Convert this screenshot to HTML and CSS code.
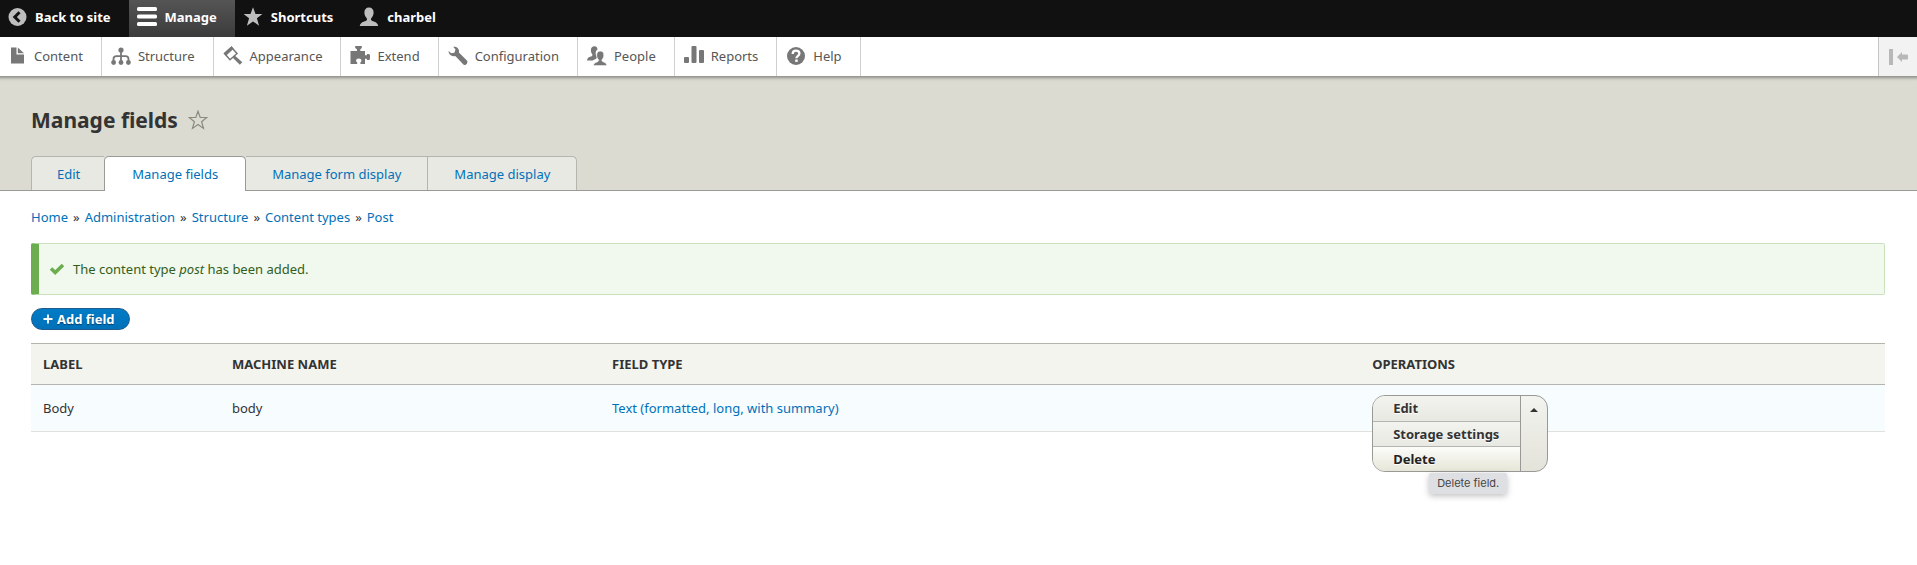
FILE: index.html
```html
<!DOCTYPE html>
<html lang="en">
<head>
<meta charset="utf-8">
<title>Manage fields</title>
<link rel="stylesheet" href="styles.css">
</head>
<body>
<nav class="bar" aria-label="Toolbar">
  <a class="bar-item" href="#"><svg class="icon" viewBox="0 0 20 20"><circle cx="10.500" cy="10" r="9" fill="#bebebe"/><path d="M12.500 5.200 7.800 10l4.700 4.800" fill="none" stroke="#111" stroke-width="3"/></svg>Back to site</a>
  <a class="bar-item bar-item-active" href="#"><svg class="icon" viewBox="0 0 20 20"><g fill="#fff"><rect y="0" width="20" height="4" rx="1.500"/><rect y="7.500" width="20" height="4" rx="1.500"/><rect y="15" width="20" height="4" rx="1.500"/></g></svg>Manage</a>
  <a class="bar-item" href="#"><svg class="icon" viewBox="0 0 20 20"><path fill="#bebebe" d="M10 .3l2.500 6.700h6.900l-5.500 4.300 2.200 7.400L10 14.400l-6.100 4.300 2.200-7.400L.6 7h6.900z"/></svg>Shortcuts</a>
  <a class="bar-item" href="#"><svg class="icon" viewBox="0 0 20 20"><path fill="#bebebe" d="M10 .5c3 0 4.700 2 4.600 5 0 2.300-1 4.300-2.300 5.700-.8 1.100-.2 2.300 1 2.800 2.600 1 5.400 1.600 5.900 4.900H.8c.5-3.300 3.300-3.900 5.900-4.900 1.200-.5 1.800-1.700 1-2.800C6.400 9.800 5.400 7.800 5.400 5.500 5.300 2.500 7 .5 10 .5z"/></svg>charbel</a>
</nav>
<nav class="tray" aria-label="Administration menu">
  <a class="tray-item" href="#"><svg class="icon" viewBox="0 0 20 20"><path d="M4 1.500h5.500v7H17v9H4z"/><path d="M10.800 1.500 17 7.300h-6.200z"/></svg>Content</a>
  <a class="tray-item" href="#"><svg class="icon" viewBox="0 0 20 20"><circle cx="10" cy="4" r="2.600"/><path fill="none" stroke="#777" stroke-width="1.800" d="M10 4v12M2.500 16v-3q0-2.800 3-2.800h9q3 0 3 2.800v3"/><circle cx="2.600" cy="16.500" r="2.400"/><circle cx="10" cy="16.500" r="2.400"/><circle cx="17.400" cy="16.500" r="2.400"/></svg>Structure</a>
  <a class="tray-item" href="#"><svg class="icon" viewBox="0 0 20 20"><path fill="none" stroke="#777" stroke-width="1.500" d="M1.500 7.500 8.500 1.300l5.500 6.200-7 6.300z"/><path d="M.8 7.300 8.500.3l2.200 2.400-7.700 7zM9.500 11.500l2.200-1.900 7.600 6.700-2.500 2.500z"/></svg>Appearance</a>
  <a class="tray-item" href="#"><svg class="icon" viewBox="0 0 20 20"><path d="M5.200 0h6.600v2L10.300 3.200V5H15v4.200h1.600L17.200 8h1.500q1.300 0 1.300 1.500v3q0 1.500-1.300 1.500h-1.500l-.6-1.200H15V18h-4.600v-1.500l1-1.200q.3-2.700-2.600-2.800-3 .1-2.700 2.800l1.100 1.200V18H.5V5h6.400V3.200L5.200 2z"/></svg>Extend</a>
  <a class="tray-item" href="#"><svg class="icon" viewBox="0 0 20 20"><path d="M5.200.8c3.500-.6 6.500 2 5.700 5.600l8 8.200c1.200 1.300 0 3.500-1.200 4.100-1.300.5-2.100 0-2.800-.7L7.300 9.900C4 11 .7 8.700.5 5.100L3.300 7.300 6.400 6.700 7.500 3.600z"/></svg>Configuration</a>
  <a class="tray-item" href="#"><svg class="icon" viewBox="0 0 20 20"><path d="M7.300.2c2 0 3.200 1.200 3.200 3.300-2.500 1.600-2.300 5.400-.3 7.800-.3 1.700-2.500 2.200-4.600 3.200H0c.2-2.400 1.700-3.200 3.900-3.900 1.500-.5 1.900-1.500 1.200-2.600C3.200 5.600 3.300.2 7.300.2z"/><path stroke="#fff" stroke-width=".8" d="M13.300 5c2.600 0 3.700 1.700 3.600 4.200-.1 2-.9 3.300-1.700 4.400-.7 1 0 1.800 1 2.200 2 .8 3.500 1.200 3.800 3.900H6.300c.3-2.700 2-3.100 4-3.900 1.200-.5 1.700-1.200 1-2.200-.8-1.100-1.700-2.400-1.700-4.400 0-2.500 1.100-4.200 3.700-4.200z"/></svg>People</a>
  <a class="tray-item" href="#"><svg class="icon" viewBox="0 0 20 20"><rect x="0" y="11" width="5" height="6" rx="1"/><rect x="7.500" y="0" width="5" height="17" rx="1"/><rect x="15" y="4" width="5" height="13" rx="1"/></svg>Reports</a>
  <a class="tray-item" href="#"><svg class="icon" viewBox="0 0 20 20"><circle cx="10" cy="10" r="9"/><path fill="none" stroke="#fff" stroke-width="2.300" d="M6.700 8c0-2.300 1.300-3.300 3.300-3.300s3.400 1 3.400 2.800c0 2.300-3 2.300-3 4.800"/><rect x="9.200" y="13.500" width="2.500" height="2.400" fill="#fff"/></svg>Help</a>
  <button class="tray-toggle" type="button" aria-label="Vertical orientation"><svg class="toggle-icon" viewBox="0 0 20 16"><path fill="#b8b8b8" d="M1 0h4v16H1zM9 8l5-5v2.500h5q1 0 1 1v3q0 1-1 1h-5V13z"/></svg></button>
</nav>
<header class="header">
  <div class="title-row">
    <h1 class="title">Manage fields</h1>
    <button class="star" type="button" aria-label="Add to shortcuts"><svg class="star-icon" viewBox="0 0 20 20"><path fill="none" stroke="#8a8b7b" stroke-width="1.200" d="M10 1.200l2.200 6.300h6.600l-5.200 4.200 1.900 6.700-5.500-3.800-5.500 3.800 1.900-6.700-5.200-4.200h6.600z"/></svg></button>
  </div>
  <nav class="tabs" aria-label="Tabs">
    <a class="tab" href="#">Edit</a>
    <a class="tab tab-active" href="#">Manage fields</a>
    <a class="tab" href="#">Manage form display</a>
    <a class="tab" href="#">Manage display</a>
  </nav>
</header>
<main class="content">
  <nav class="breadcrumb" aria-label="Breadcrumb"><a href="#">Home</a> » <a href="#">Administration</a> » <a href="#">Structure</a> » <a href="#">Content types</a> » <a href="#">Post</a></nav>
  <div class="message" role="status"><svg class="check" viewBox="0 0 16 12"><path d="M2 5.500 6.200 9.500 14 2" fill="none" stroke="#6bad4f" stroke-width="3.500"/></svg><span>The content type <em>post</em> has been added.</span></div>
  <a class="add" href="#"><svg class="plus" viewBox="0 0 10 10"><path d="M5 .5v9M.5 5h9" stroke="#fff" stroke-width="1.800"/></svg>Add field</a>
  <table class="table">
    <thead>
      <tr><th class="col-label">Label</th><th class="col-name">Machine name</th><th class="col-type">Field type</th><th>Operations</th></tr>
    </thead>
    <tbody>
      <tr>
        <td>Body</td>
        <td>body</td>
        <td><a href="#">Text (formatted, long, with summary)</a></td>
        <td>
          <div class="drop-anchor">
            <div class="drop">
              <div class="drop-list">
                <a class="drop-item" href="#">Edit</a>
                <a class="drop-item" href="#">Storage settings</a>
                <a class="drop-item drop-item-hover" href="#">Delete</a>
              </div>
              <button class="drop-toggle" type="button" aria-label="List additional actions"><span class="caret"></span></button>
            </div>
            <div class="tooltip" role="tooltip">Delete field.</div>
          </div>
        </td>
      </tr>
    </tbody>
  </table>
</main>
</body>
</html>
```
FILE: styles.css
```css
* { box-sizing: border-box; }

body {
  min-height: 100vh;
  margin: 0;
  background: #fff;
  color: #333;
  font: 13px/20px "Lucida Grande", "Noto Sans", "Open Sans", sans-serif;
}

a { color: #0071b8; text-decoration: none; }
button { font: inherit; padding: 0; border: 0; cursor: pointer; }

/* Toolbar */
.bar { display: flex; height: 37px; background: #111; }
.bar-item {
  display: flex;
  align-items: center;
  gap: 8px;
  padding: 0 18px 3px 8px;
  color: #fff;
  font-weight: 700;
}
.bar-item:first-child, .tray-item:first-child { padding-left: 7px; }
.bar-item-active { background: linear-gradient(#555, #3b3b3b); }
.icon { width: 20px; height: 20px; flex: none; }

.tray {
  position: relative;
  display: flex;
  height: 39px;
  background: #fff;
  box-shadow: 0 0 3px 2px #8c8d86;
  clip-path: inset(0 0 -8px 0);
}
.tray-item {
  display: flex;
  align-items: center;
  gap: 7px;
  padding: 0 18px 2px 9px;
  border-right: 1px solid #d0d0d0;
  color: #565656;
}
.tray-item .icon { fill: #777; }
.tray-toggle {
  display: flex;
  align-items: center;
  justify-content: center;
  width: 39px;
  margin-left: auto;
  border-left: 1px solid #c4c4c4;
  background: #f2f2f2;
}
.toggle-icon { width: 20px; height: 16px; }

/* Page header */
.header {
  padding: 28px 31px 0;
  background: #dbdbd2;
  border-bottom: 1px solid #999a95;
}
.title-row { display: flex; align-items: center; gap: 10px; height: 32px; }
.title { margin: 0; font-size: 21px; line-height: 32px; font-weight: 700; }
.star { display: flex; background: none; }
.star-icon { width: 20px; height: 20px; }
.tabs { display: flex; margin-top: 20px; }
.tab {
  height: 34px;
  padding: 0 26px;
  border: 1px solid #b4b5ae;
  border-width: 1px 1px 0 0;
  background: #e9e9e4;
  line-height: 34px;
}
.tab:first-child { padding: 0 24px 0 25px; border-left-width: 1px; border-right: 0; border-top-left-radius: 5px; }
.tab:last-child { border-top-right-radius: 5px; }
.tab-active {
  height: 35px;
  margin-bottom: -1px;
  padding: 0 27px;
  border-color: #999a95;
  border-left-width: 1px;
  border-radius: 5px 5px 0 0;
  background: #fff;
}

/* Content */
.content { padding: 16px 32px 0 31px; }
.breadcrumb { display: flex; gap: 5px; margin-bottom: 16px; }
.message {
  display: flex;
  align-items: center;
  gap: 8px;
  height: 52px;
  padding: 0 10px;
  border: 1px solid #c9e1bd;
  border-left: 8px solid #6bad4f;
  border-radius: 2px;
  background: #f1f8ed;
  color: #325e1c;
}
.check { width: 16px; height: 12px; }
.add {
  display: flex;
  align-items: center;
  gap: 4px;
  width: fit-content;
  height: 22px;
  margin: 13px 0;
  padding: 0 14px 0 11px;
  border: 1px solid #1e5c90;
  border-radius: 11px;
  background: linear-gradient(#007bc6, #0071b8);
  color: #fff;
  font-weight: 700;
  text-shadow: 0 1px 1px #00406f;
}
.plus { width: 10px; height: 10px; }

.table { width: 100%; border-collapse: collapse; table-layout: fixed; }
th, td { padding: 0 12px; text-align: left; }
th {
  height: 41px;
  border: solid #b4b5ae;
  border-width: 1px 0;
  background: #f3f4ee;
  text-transform: uppercase;
}
td { height: 47px; border-bottom: 1px solid #e0e0dc; background: #f7fcff; }
.col-label { width: 189px; }
.col-name { width: 380px; }
.col-type { width: 41%; }

/* Operations menu, opened over the table */
.drop-anchor { position: relative; height: 27px; }
.drop {
  position: absolute;
  top: 0;
  left: 0;
  display: flex;
  width: 176px;
  overflow: hidden;
  border: 1px solid #999a95;
  border-radius: 13px;
  background: linear-gradient(#f3f3ef, #e3e3da);
}
.drop-list { flex: 1; border-right: 1px solid #999a95; }
.drop-item {
  display: block;
  height: 25px;
  padding-left: 20px;
  background: linear-gradient(#f3f3ef, #e9e9e3);
  color: #333;
  font-weight: 700;
  line-height: 24px;
  text-shadow: 0 1px 0 #fff;
}
.drop-item + .drop-item { border-top: 1px solid #b4b5ae; }
.drop-item-hover { background: linear-gradient(#fcfcfa, #e6e6d8); color: #222; }
.drop-toggle {
  display: flex;
  align-items: flex-start;
  justify-content: center;
  width: 26px;
  padding-top: 12px;
  background: none;
}
.caret { border: 4px solid transparent; border-top: 0; border-bottom-color: #333; }
.tooltip {
  position: absolute;
  top: 78px;
  left: 57px;
  padding: 0 8px;
  border-radius: 2px;
  background: #dedfe2;
  box-shadow: 0 2px 6px #00000040;
  color: #454648;
  font: 11px/21px Inter, sans-serif;
  white-space: nowrap;
}
```
